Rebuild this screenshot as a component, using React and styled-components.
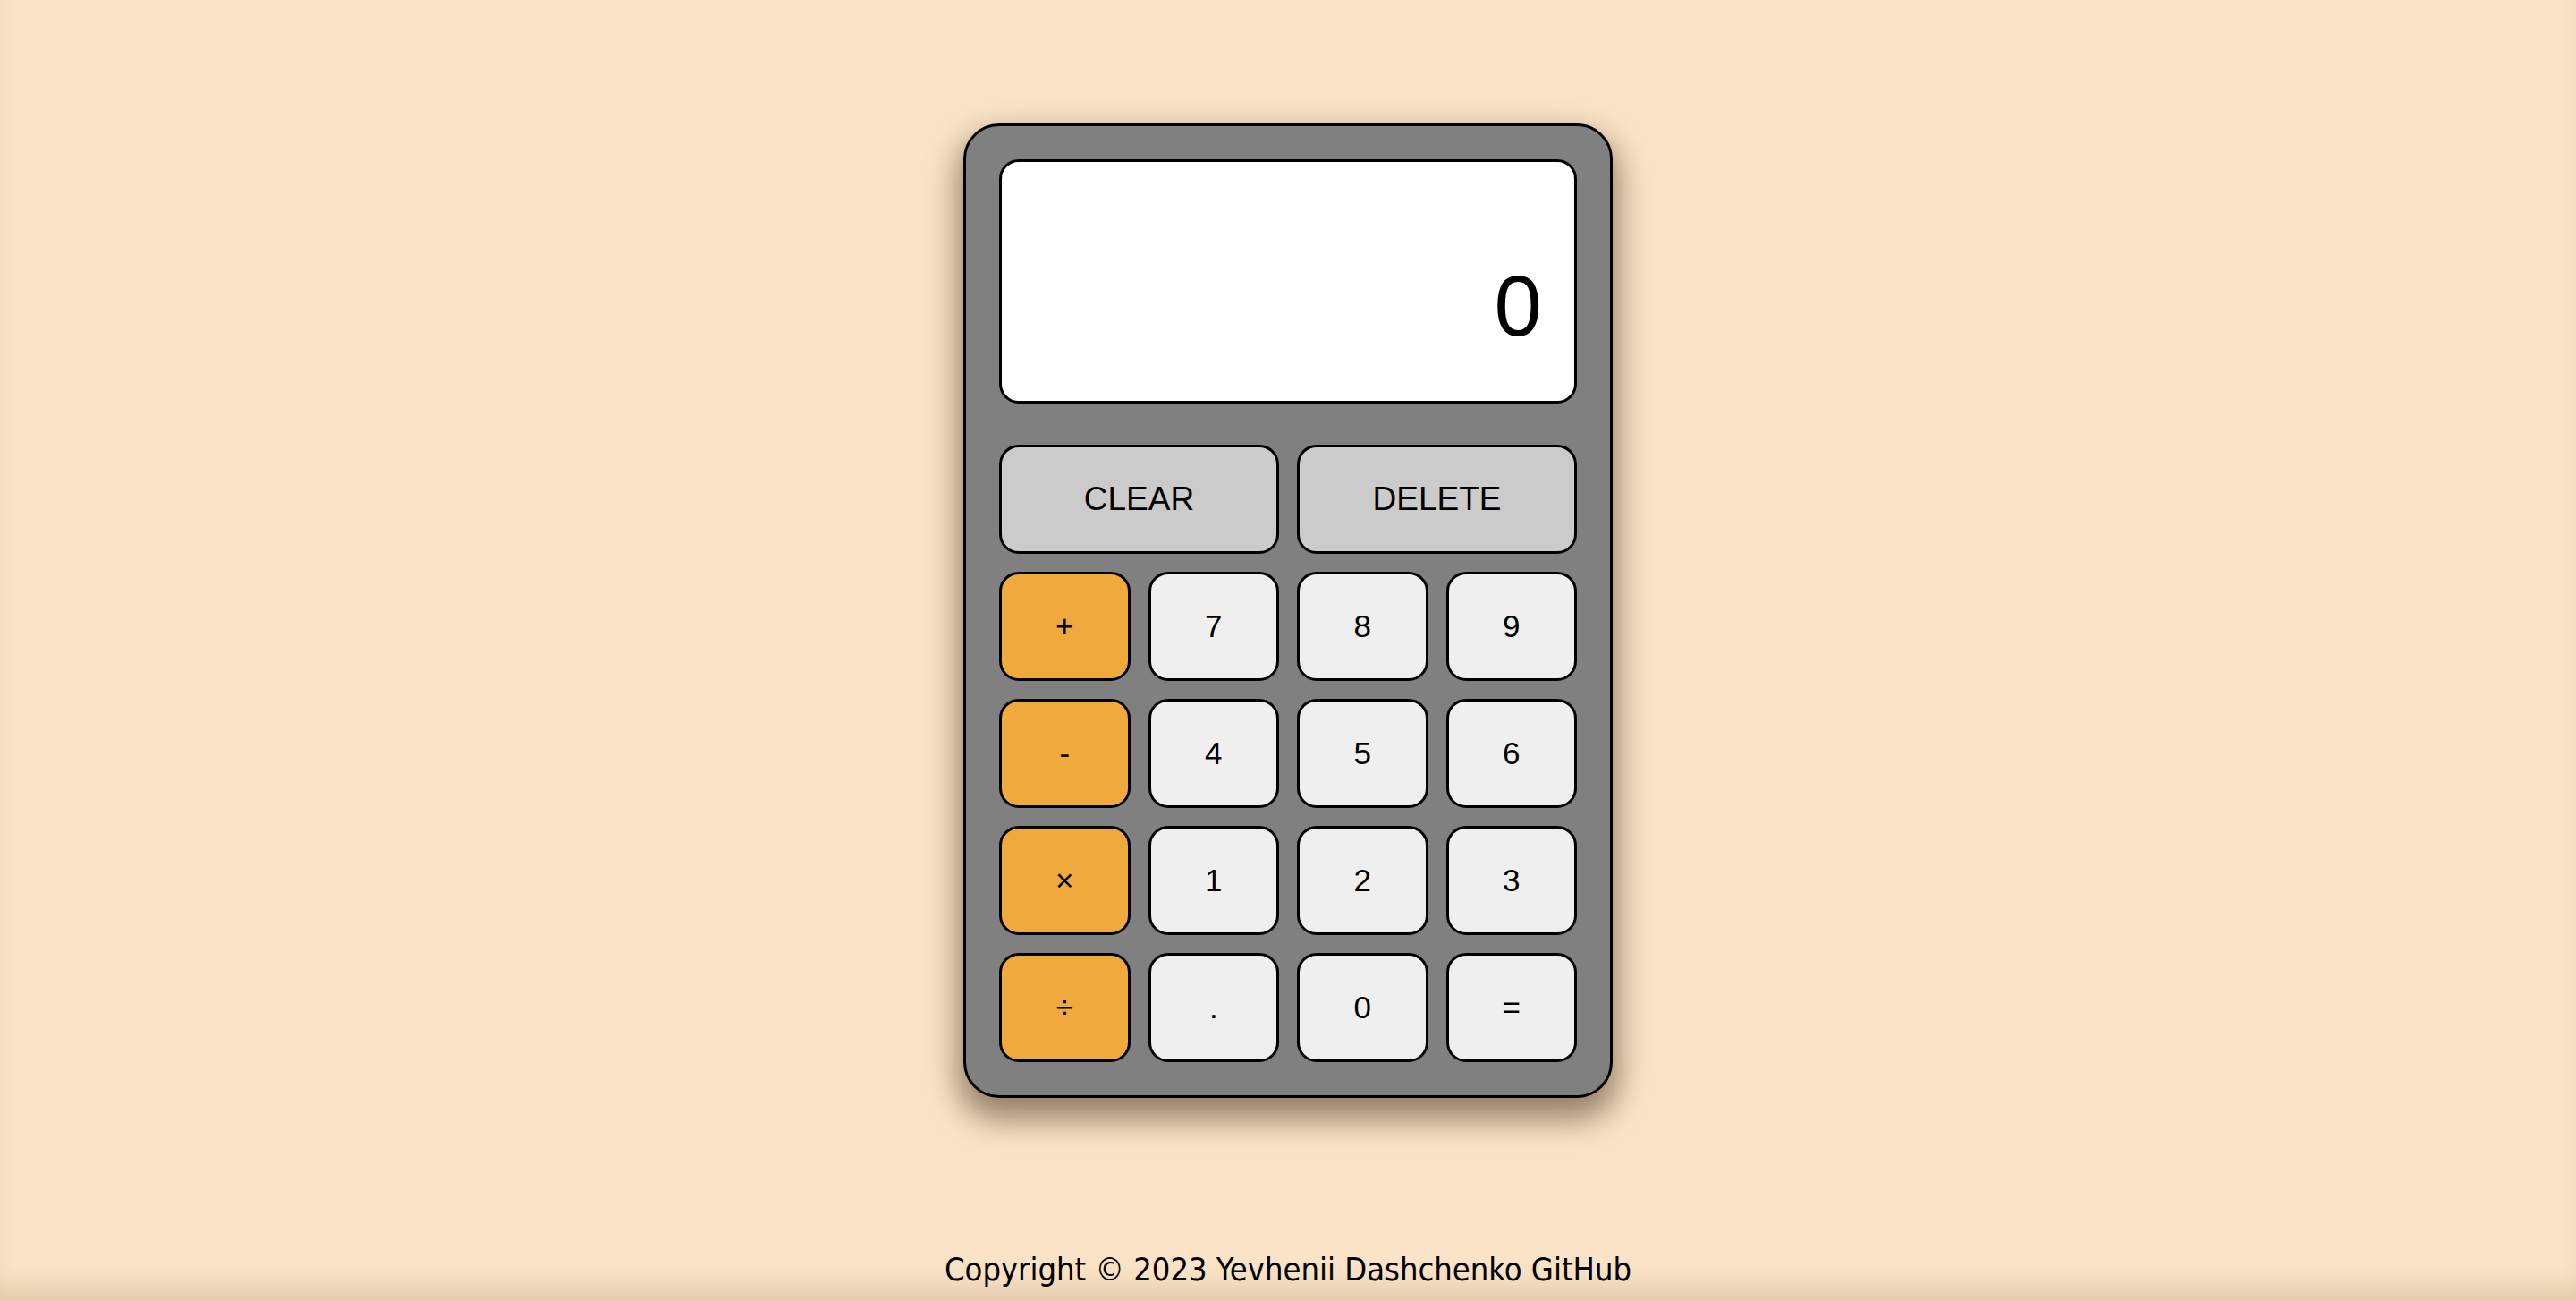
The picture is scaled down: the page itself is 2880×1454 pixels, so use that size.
import React, { useState } from "react";
import styled, { createGlobalStyle } from "styled-components";

const GlobalStyle = createGlobalStyle`
	html, body {
		margin: 0;
		padding: 0;
	}
	body {
		background-color: #fae3c7;
		font-family: "Liberation Sans", Arial, sans-serif;
	}
`;

const keys = [
	{ label: "+", kind: "op" },
	{ label: "7" },
	{ label: "8" },
	{ label: "9" },
	{ label: "-", kind: "op" },
	{ label: "4" },
	{ label: "5" },
	{ label: "6" },
	{ label: "×", kind: "op" },
	{ label: "1" },
	{ label: "2" },
	{ label: "3" },
	{ label: "÷", kind: "op" },
	{ label: "." },
	{ label: "0" },
	{ label: "=" },
];

const App = () => {
	const [current] = useState("0");

	return (
		<Page>
			<GlobalStyle />
			<Calculator>
				<Display>
					<Previous />
					<Current>{current}</Current>
				</Display>
				<Keypad>
					<Key kind="action" wide>CLEAR</Key>
					<Key kind="action" wide>DELETE</Key>
					{keys.map((k, i) => (
						<Key kind={k.kind} key={i}>{k.label}</Key>
					))}
				</Keypad>
			</Calculator>
			<Footer>Copyright © 2023 Yevhenii Dashchenko GitHub</Footer>
		</Page>
	);
};

export default App;

const Page = styled.div`
	display: flex;
	flex-direction: column;
	align-items: center;
	min-height: 100vh;
	box-sizing: border-box;
	padding-top: 138px;
	box-shadow: inset 0 -26px 30px -14px rgba(120, 90, 50, 0.22);
`;

const Calculator = styled.div`
	width: 646px;
	padding: 37px;
	border: 3px solid #000;
	border-radius: 40px;
	background-color: #808080;
	box-shadow: 0 18px 34px 6px rgba(70, 50, 25, 0.55);
`;

const Display = styled.div`
	display: flex;
	flex-direction: column;
	align-items: flex-end;
	justify-content: flex-end;
	box-sizing: border-box;
	height: 273px;
	margin-bottom: 46px;
	padding: 0 36px 51px;
	background-color: #fff;
	border: 3px solid #000;
	border-radius: 22px;
`;

const Previous = styled.div`
	font-size: 40px;
	color: rgba(0, 0, 0, 0.6);
`;

const Current = styled.div`
	font-size: 96px;
	color: #000;
`;

const Keypad = styled.div`
	display: grid;
	grid-template-columns: repeat(4, 1fr);
	grid-auto-rows: 122px;
	gap: 20px;
`;

const Key = styled.button`
	grid-column: ${(props) => (props.wide ? "span 2" : "span 1")};
	border: 3px solid #000;
	border-radius: 22px;
	font-family: "Liberation Sans", Arial, sans-serif;
	font-size: ${(props) => (props.kind === "action" ? "37px" : "35px")};
	color: #000;
	cursor: pointer;
	background-color: ${(props) =>
		props.kind === "op" ? "#f0a93c" : props.kind === "action" ? "#cbcbcb" : "#efefef"};
`;

const Footer = styled.footer`
	margin-top: auto;
	padding-bottom: 15px;
	font-family: "DejaVu Sans Condensed", "DejaVu Sans", sans-serif;
	font-size: 36px;
	color: #000;
`;
